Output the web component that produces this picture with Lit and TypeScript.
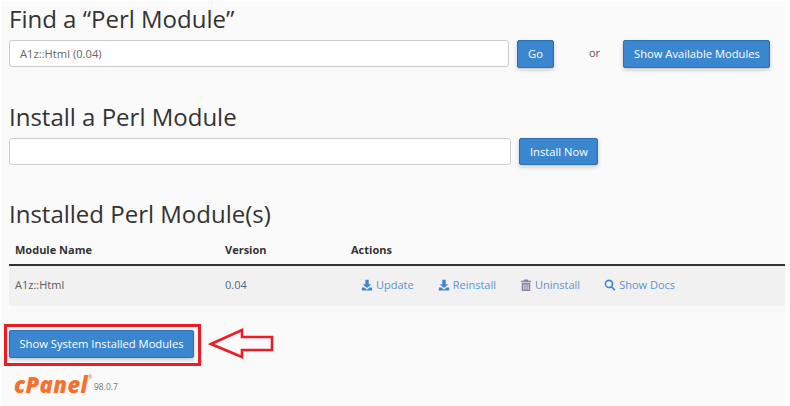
import { LitElement, html, css } from 'lit';
import { customElement } from 'lit/decorators.js';

const downloadIcon = html`<svg class="icon" viewBox="0 0 14 14"><path d="M5 1h4v5h3L7 10.5 2 6h3z"/><path d="M1 10h3l3 2.5 3-2.5h3v3.5H1z"/></svg>`;
const trashIcon = html`<svg class="icon" viewBox="0 0 14 14"><path d="M5 .5h4l1 1.5h3v1.5H1V2h3z"/><path fill-rule="evenodd" d="M2 4.5h10V14H2zM4 6v6.5h1V6zm2.5 0v6.5h1V6zM9 6v6.5h1V6z"/></svg>`;
const searchIcon = html`<svg class="icon" viewBox="0 0 14 14"><path fill-rule="evenodd" d="M5.7.5a5.2 5.2 0 0 1 4.2 8.3l3.6 3.6-1.4 1.4-3.6-3.6A5.2 5.2 0 1 1 5.7.5zm0 2a3.2 3.2 0 1 0 0 6.4 3.2 3.2 0 0 0 0-6.4z"/></svg>`;

@customElement('app-root')
export class AppRoot extends LitElement {
  static styles = css`
    :host {
      display: block;
      width: 790px;
      height: 406px;
      overflow: hidden;
      background: #fff;
      font-family: 'Open Sans', sans-serif;
      color: #333;
    }
    .page {
      position: relative;
      box-sizing: border-box;
      width: 784px;
      height: 404px;
      margin: 2px 0 0 1px;
      padding: 0 0 0 8px;
      background: #fafafa;
    }
    h2 {
      margin: 0;
      font-size: 24px;
      line-height: 26px;
      font-weight: 400;
      color: #333;
    }
    .find h2 { padding-top: 4px; }
    .row {
      display: flex;
      align-items: flex-start;
      margin-top: 8px;
    }
    .input {
      box-sizing: border-box;
      height: 27px;
      padding: 0 10px;
      background: #fff;
      border: 1px solid #ccc;
      border-radius: 3px;
      font-size: 11.2px;
      line-height: 25px;
      color: #666;
    }
    .find .input { width: 500px; }
    .install .input { width: 502px; }
    .btn {
      box-sizing: border-box;
      height: 28px;
      padding: 0 9.5px 0 10px;
      background: #3a87cf;
      border: 1px solid #2a6fb0;
      border-radius: 2px;
      box-shadow: 0 2px 4px rgba(0, 0, 0, 0.2);
      color: #fff;
      font-family: inherit;
      font-size: 11.2px;
      line-height: 26px;
      white-space: nowrap;
    }
    .install .btn { height: 27px; line-height: 25px; }
    .go { margin-left: 8px; }
    .find .go { width: 37px; padding: 0; text-align: center; }
    .or {
      box-sizing: border-box;
      width: 69px;
      padding-left: 12px;
      text-align: center;
      font-size: 11px;
      line-height: 26px;
      color: #555;
    }
    .install { margin-top: 36px; }
    .installed { margin-top: 36px; }
    table {
      width: 776px;
      margin-top: 5px;
      border-collapse: collapse;
      table-layout: fixed;
      font-size: 11px;
    }
    th, td { box-sizing: border-box; }
    th {
      height: 33px;
      padding: 3px 6px 0;
      text-align: left;
      font-weight: 700;
      border-bottom: 2px solid #333;
    }
    td {
      height: 41px;
      padding: 0 6px 3px;
      background: #f1f1f1;
      color: #5c5c5c;
    }
    .version { color: #4a6a8a; }
    .actions {
      display: flex;
      padding-left: 10px;
    }
    .action {
      display: flex;
      align-items: center;
      gap: 3px;
      margin-right: 24px;
      color: #5a94d6;
    }
    .action.danger { color: #6f8fc4; }
    .icon {
      width: 12px;
      height: 12px;
      fill: #3f86cf;
    }
    .danger .icon { fill: #8a80a8; }
    .system { margin-top: 24px; }
    .system .btn { width: 185px; padding: 0; text-align: center; }
    .footer {
      display: flex;
      align-items: center;
      margin: 15px 0 0 5px;
    }
    .logo {
      width: 80px;
      font-size: 22px;
      line-height: 22px;
      font-weight: 800;
      font-style: italic;
      letter-spacing: 0.4px;
      white-space: nowrap;
      color: #f8702c;
    }
    .logo sup {
      font-size: 5px;
      line-height: 0;
      font-weight: 400;
      font-style: normal;
      letter-spacing: 0;
      vertical-align: 14px;
    }
    .ver {
      margin-top: 5px;
      font-size: 8.5px;
      line-height: 14px;
      color: #777;
    }
    .mark {
      position: absolute;
      left: 3px;
      top: 322px;
      width: 197px;
      height: 42px;
      box-sizing: border-box;
      border: 3px solid #ed1c24;
    }
    .arrow {
      position: absolute;
      left: 207px;
      top: 325px;
    }
  `;

  render() {
    return html`<div class="page">
      <section class="find">
        <h2>Find a “Perl Module”</h2>
        <div class="row">
          <div class="input">A1z::Html (0.04)</div>
          <div class="btn go">Go</div>
          <div class="or">or</div>
          <div class="btn">Show Available Modules</div>
        </div>
      </section>
      <section class="install">
        <h2>Install a Perl Module</h2>
        <div class="row">
          <div class="input"></div>
          <div class="btn go">Install Now</div>
        </div>
      </section>
      <section class="installed">
        <h2>Installed Perl Module(s)</h2>
        <table>
          <colgroup><col style="width:210px" /><col style="width:126px" /><col /></colgroup>
          <thead>
            <tr><th>Module Name</th><th>Version</th><th>Actions</th></tr>
          </thead>
          <tbody>
            <tr>
              <td>A1z::Html</td>
              <td class="version">0.04</td>
              <td>
                <div class="actions">
                  <span class="action">${downloadIcon}Update</span>
                  <span class="action">${downloadIcon}Reinstall</span>
                  <span class="action danger">${trashIcon}Uninstall</span>
                  <span class="action">${searchIcon}Show Docs</span>
                </div>
              </td>
            </tr>
          </tbody>
        </table>
      </section>
      <div class="row system"><div class="btn">Show System Installed Modules</div></div>
      <div class="footer"><span class="logo">cPanel<sup>®</sup></span><span class="ver">98.0.7</span></div>
      <div class="mark"></div>
      <svg class="arrow" width="68" height="34" viewBox="0 0 68 34">
        <path d="M3 17 34 3v7h30v13H34v7z" fill="none" stroke="#ed1c24" stroke-width="2.6"/>
      </svg>
    </div>`;
  }
}
